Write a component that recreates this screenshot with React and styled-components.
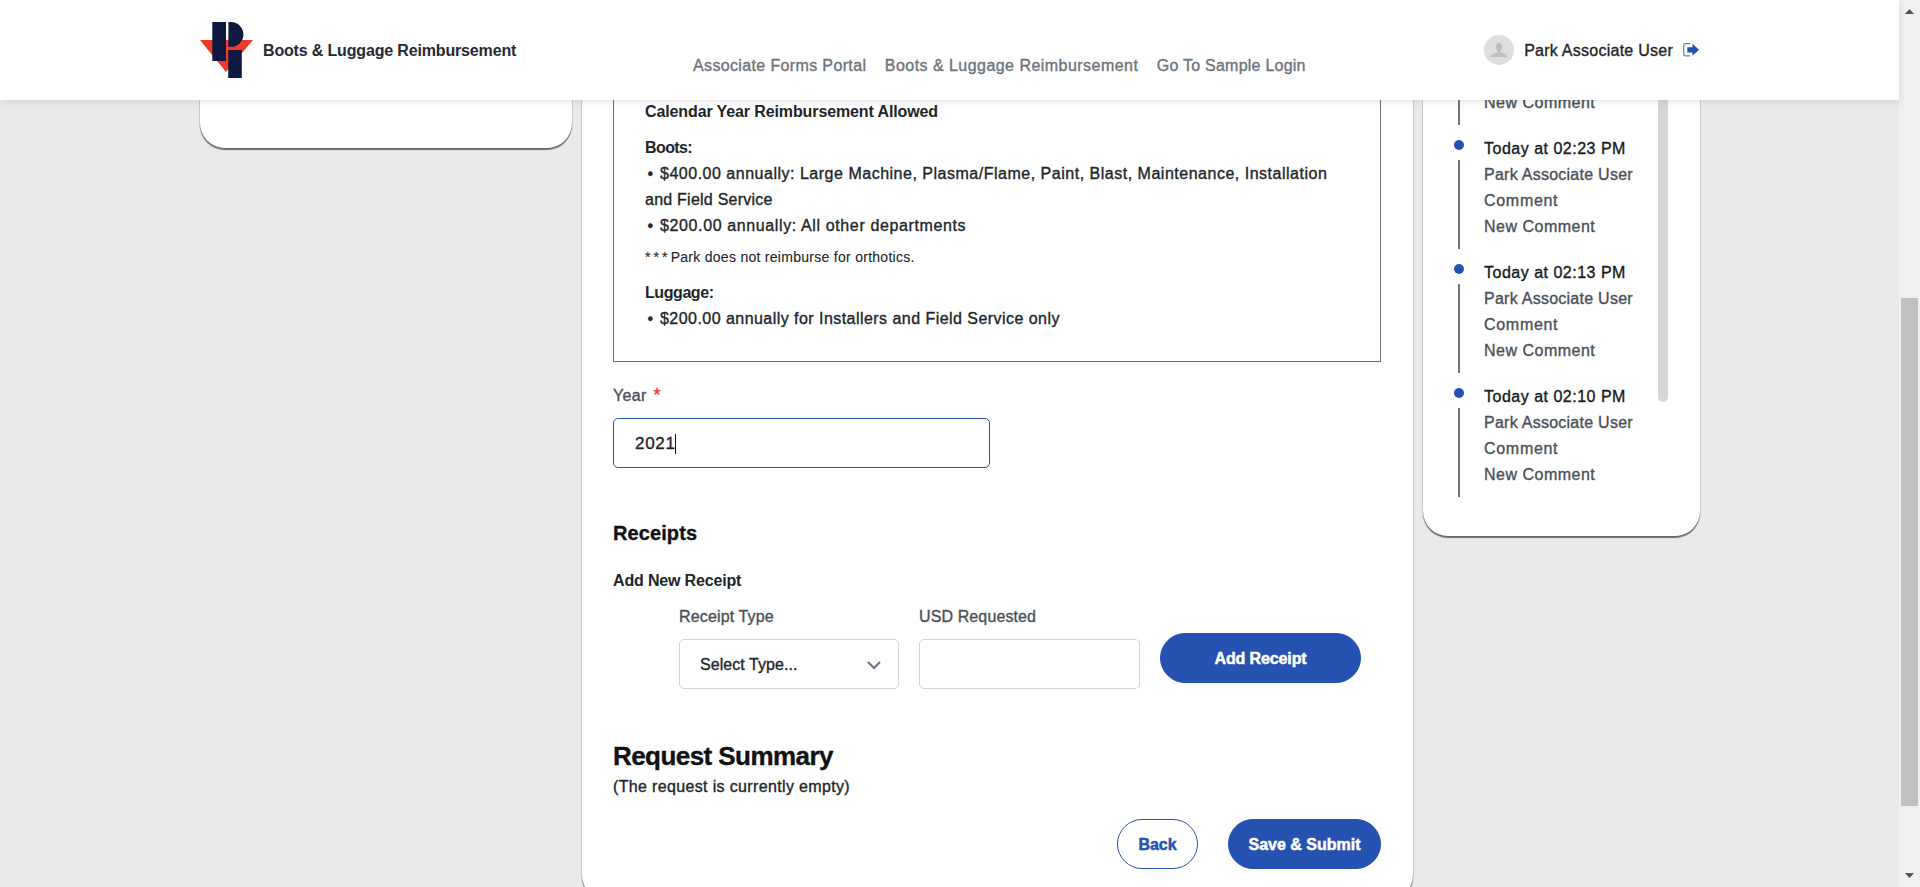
import React from 'react';
import styled, { createGlobalStyle } from 'styled-components';

const BLUE = '#2552b0';

const GlobalStyle = createGlobalStyle`
  * { box-sizing: border-box; }
  body {
    margin: 0;
    overflow: hidden;
    background: #eaeaea;
    color: #212529;
    font: 16px/26px "Liberation Sans", Arial, sans-serif;
    -webkit-text-stroke: 0.35px currentColor;
  }
  button, input { font: inherit; color: inherit; }
`;

const Window = styled.div`
  display: flex;
  height: 887px;
  overflow: hidden;
`;

const Page = styled.div`
  flex: 1;
  min-width: 0;
  display: flex;
  flex-direction: column;
`;

const Header = styled.header`
  position: relative;
  z-index: 2;
  flex: none;
  height: 100px;
  padding: 0 200px;
  display: flex;
  justify-content: space-between;
  background: #fff;
  box-shadow: 0 2px 8px rgba(0, 0, 0, 0.1);
`;

const Text = styled.span`
  white-space: nowrap;
  letter-spacing: ${(p) => p.$ls || 0}px;
`;

const Brand = styled.div`
  display: flex;
  align-items: center;
  width: 493px;
  gap: 9px;
  font-weight: 700;
  -webkit-text-stroke: 0;
  color: #262930;
  svg { display: block; }
  ${Text} { padding-top: 1px; }
`;

const Nav = styled.nav`
  display: flex;
  flex: 1;
  gap: 18.5px;
  padding-top: 53px;
  color: #6b737b;
`;

const User = styled.div`
  display: flex;
  align-items: center;
  svg { flex: none; }
  ${Text} { padding-top: 1px; }
`;

const Avatar = styled.span`
  display: grid;
  place-items: center;
  width: 30px;
  height: 30px;
  margin-right: 10px;
  border-radius: 50%;
  background: #dedede;
`;

const Logout = styled.svg`
  margin: -1px 0 0 10px;
`;

const Columns = styled.main`
  flex: 1;
  min-height: 0;
  padding: 0 199px 0 200px;
  display: flex;
  align-items: flex-start;
  gap: 10px;
`;

const Card = styled.section`
  flex: none;
  width: ${(p) => p.$width}px;
  height: ${(p) => p.$height}px;
  padding: ${(p) => p.$padding || 0};
  border-radius: 0 0 25px 25px;
  background: #fff;
  box-shadow: 0 1.5px 1px #6c6c6c, 0 0 0 1px #d2d2d2;
`;

const Policy = styled.div`
  height: 262px;
  padding: 0 31px;
  border: 1px solid #6a6f7c;
  border-top: 0;
`;

const PolicyTitle = styled.div`
  font-weight: 700;
  -webkit-text-stroke: 0;
  line-height: ${(p) => p.$lh || 26}px;
  margin-top: ${(p) => p.$top || 0}px;
`;

const PolicyItem = styled.div`
  white-space: nowrap;
`;

const Bullet = styled.span`
  display: inline-block;
  width: 15px;
  padding-left: 2.5px;
`;

const Note = styled.div`
  margin-top: 6px;
  font-size: 14px;
  line-height: 24px;
  -webkit-text-stroke: 0.1px currentColor;
`;

const Label = styled.label`
  display: block;
  color: #495057;
`;

const Required = styled.span`
  margin-left: 7px;
  font-size: 18px;
  line-height: 20px;
  color: #f0352b;
`;

const YearField = styled.div`
  margin-top: 21px;
`;

const Control = styled.div`
  display: flex;
  align-items: center;
  justify-content: space-between;
  width: ${(p) => p.$width}px;
  height: 50px;
  margin-top: 9px;
  padding: 1px 17px 0 20px;
  border: 1px solid ${(p) => (p.$focused ? BLUE : '#ced4da')};
  border-radius: 5px;
  background: #fff;
`;

const TypedValue = styled.span`
  margin-left: 1px;
  height: 20px;
  line-height: 20px;
  width: 41px;
  font-size: 17px;
  letter-spacing: 0.7px;
  border-right: 1px solid #111;
`;

const SectionTitle = styled.h3`
  margin: 52px 0 0;
  font-size: 20px;
  line-height: 26px;
  color: #111;
`;

const SubTitle = styled.h4`
  margin: 22px 0 0;
  font-size: 16px;
  line-height: 26px;
  -webkit-text-stroke: 0;
`;

const ReceiptRow = styled.div`
  display: flex;
  gap: 20px;
  margin-top: 10px;
  padding-left: 66px;
`;

const Button = styled.button`
  width: ${(p) => p.$width}px;
  height: 50px;
  padding: 1px 0 0;
  border: 1px solid ${BLUE};
  border-radius: 25px;
  background: ${(p) => (p.$outline ? '#fff' : BLUE)};
  color: ${(p) => (p.$outline ? BLUE : '#fff')};
  font-weight: 700;
  -webkit-text-stroke: 0.5px currentColor;
`;

const AddButton = styled(Button)`
  margin-top: 29px;
`;

const SummaryTitle = styled.h2`
  margin: 51px 0 0;
  font-size: 26px;
  line-height: 32px;
  color: #111;
`;

const EmptyNotice = styled.div`
  margin-top: 2px;
`;

const Actions = styled.div`
  display: flex;
  justify-content: flex-end;
  gap: 30px;
  margin-top: 19px;
`;

const HistoryCard = styled(Card)`
  display: flex;
  align-items: flex-start;
`;

const Timeline = styled.ul`
  width: 205px;
  margin: 0 0 0 30px;
  padding: 0;
  list-style: none;
`;

const Entry = styled.li`
  display: flex;
  height: 124px;
  gap: 24px;
  color: #495057;
`;

const Marker = styled.div`
  display: flex;
  flex-direction: column;
  align-items: center;
  gap: 10px;
  width: 10px;
  margin: 4px -4px 0 1px;
  &::before {
    content: '';
    width: 10px;
    height: 10px;
    border-radius: 50%;
    background: ${BLUE};
  }
  &::after {
    content: '';
    width: 2px;
    height: 89px;
    background: #6c757d;
  }
`;

const EntryText = styled.div`
  display: flex;
  flex-direction: column;
`;

const Stamp = styled.div`
  color: #16191c;
`;

const ScrolledEntry = styled.li`
  display: flex;
  gap: 25px;
  height: 36px;
  padding-left: 5px;
  color: #495057;
  &::before {
    content: '';
    width: 2px;
    height: 25px;
    background: #6c757d;
  }
  ${Text} { margin: -10px 0 0 -1px; }
`;

const ListScrollbar = styled.div`
  width: 10px;
  height: 302px;
  border-radius: 0 0 5px 5px;
  background: #d6d6d6;
`;

const PageScrollbar = styled.div`
  display: flex;
  flex-direction: column;
  align-items: center;
  justify-content: space-between;
  width: 21px;
  padding: 9px 0;
  background: #f0f0f0;
`;

const Thumb = styled.div`
  width: 17px;
  height: 508px;
  margin-top: 216px;
  background: #c1c1c1;
`;

const entries = ['02:23', '02:13', '02:10'];

const Logo = () => (
  <svg width="54" height="56" viewBox="0 0 54 56">
    <path d="M0 18H53L26 50Z" fill="#f03a2a" />
    <path d="M12.3 0H26V39H12.3Z" fill="#0e1940" />
    <path d="M28.4 0H31A12.4 12.4 0 0 1 31 24.8H28.4Z" fill="#0e1940" />
    <path d="M28.2 28H41.8V56H28.2Z" fill="#0e1940" />
  </svg>
);

export default function App() {
  return (
    <Window>
      <GlobalStyle />
      <Page>
        <Header>
          <Brand>
            <Logo />
            <Text $ls={-0.16}>Boots &amp; Luggage Reimbursement</Text>
          </Brand>
          <Nav>
            <Text $ls={0.36}>Associate Forms Portal</Text>
            <Text $ls={0.46}>Boots &amp; Luggage Reimbursement</Text>
            <Text $ls={0.237}>Go To Sample Login</Text>
          </Nav>
          <User>
            <Avatar>
              <svg width="16" height="15" viewBox="0 0 16 15">
                <path d="M8 0C5.8 0 5 1.5 5 3.6C5 5.4 5.7 7 6.4 7.8V9.2C5 10 0 10.3 0 14H16C16 10.3 11 10 9.6 9.2V7.8C10.3 7 11 5.4 11 3.6C11 1.5 10.2 0 8 0Z" fill="#bfbfbf" />
              </svg>
            </Avatar>
            <Text $ls={0.253}>Park Associate User</Text>
            <Logout width="16" height="14" viewBox="0 0 16 14">
              <path d="M7 .7H2.6Q.7 .7 .7 2.6V11Q.7 12.9 2.6 12.9H7" fill="none" stroke={BLUE} strokeWidth="1.2" opacity="0.75" />
              <path d="M4.3 4.2H9.5V.8L16 6.8L9.5 12.8V9.5H4.3Z" fill={BLUE} />
            </Logout>
          </User>
        </Header>
        <Columns>
          <Card $width={372} $height={48} />
          <Card $width={831} $height={800} $padding="0 32px 0 31px">
            <Policy>
              <PolicyTitle $lh={24}><Text $ls={-0.114}>Calendar Year Reimbursement Allowed</Text></PolicyTitle>
              <PolicyTitle $top={11}><Text $ls={-0.6}>Boots:</Text></PolicyTitle>
              <PolicyItem><Bullet>•</Bullet><Text $ls={0.51}>$400.00 annually: Large Machine, Plasma/Flame, Paint, Blast, Maintenance, Installation</Text></PolicyItem>
              <PolicyItem><Text $ls={0.24}>and Field Service</Text></PolicyItem>
              <PolicyItem><Bullet>•</Bullet><Text $ls={0.62}>$200.00 annually: All other departments</Text></PolicyItem>
              <Note><Text $ls={3.1}>***</Text><Text $ls={0.28}>Park does not reimburse for orthotics.</Text></Note>
              <PolicyTitle $top={11}><Text $ls={-0.427}>Luggage:</Text></PolicyTitle>
              <PolicyItem><Bullet>•</Bullet><Text $ls={0.455}>$200.00 annually for Installers and Field Service only</Text></PolicyItem>
            </Policy>
            <YearField>
              <Label><Text $ls={0.3}>Year</Text><Required>*</Required></Label>
              <Control $width={377} $focused><TypedValue>2021</TypedValue></Control>
            </YearField>
            <SectionTitle><Text $ls={0.09}>Receipts</Text></SectionTitle>
            <SubTitle><Text $ls={-0.16}>Add New Receipt</Text></SubTitle>
            <ReceiptRow>
              <div>
                <Label><Text $ls={0.147}>Receipt Type</Text></Label>
                <Control $width={220}>
                  <Text $ls={0.06}>Select Type...</Text>
                  <svg width="14" height="10" viewBox="0 0 14 10">
                    <path d="M1 2L7 8L13 2" fill="none" stroke="#6b7280" strokeWidth="2" />
                  </svg>
                </Control>
              </div>
              <div>
                <Label><Text $ls={0.115}>USD Requested</Text></Label>
                <Control $width={221} />
              </div>
              <AddButton $width={201}><Text $ls={-0.12}>Add Receipt</Text></AddButton>
            </ReceiptRow>
            <SummaryTitle><Text $ls={-0.56}>Request Summary</Text></SummaryTitle>
            <EmptyNotice><Text $ls={0.35}>(The request is currently empty)</Text></EmptyNotice>
            <Actions>
              <Button $width={81} $outline><Text>Back</Text></Button>
              <Button $width={153}><Text>Save &amp; Submit</Text></Button>
            </Actions>
          </Card>
          <HistoryCard $width={277} $height={436}>
            <Timeline>
              <ScrolledEntry><Text $ls={0.5}>New Comment</Text></ScrolledEntry>
              {entries.map((time) => (
                <Entry key={time}>
                  <Marker />
                  <EntryText>
                    <Stamp><Text $ls={0.5}>Today at {time} PM</Text></Stamp>
                    <Text $ls={0.253}>Park Associate User</Text>
                    <Text $ls={0.7}>Comment</Text>
                    <Text $ls={0.5}>New Comment</Text>
                  </EntryText>
                </Entry>
              ))}
            </Timeline>
            <ListScrollbar />
          </HistoryCard>
        </Columns>
      </Page>
      <PageScrollbar>
        <svg width="9" height="5" viewBox="0 0 9 5"><path d="M4.5 0L9 5H0Z" fill="#505050" /></svg>
        <Thumb />
        <svg width="9" height="5" viewBox="0 0 9 5"><path d="M0 0H9L4.5 5Z" fill="#505050" /></svg>
      </PageScrollbar>
    </Window>
  );
}
